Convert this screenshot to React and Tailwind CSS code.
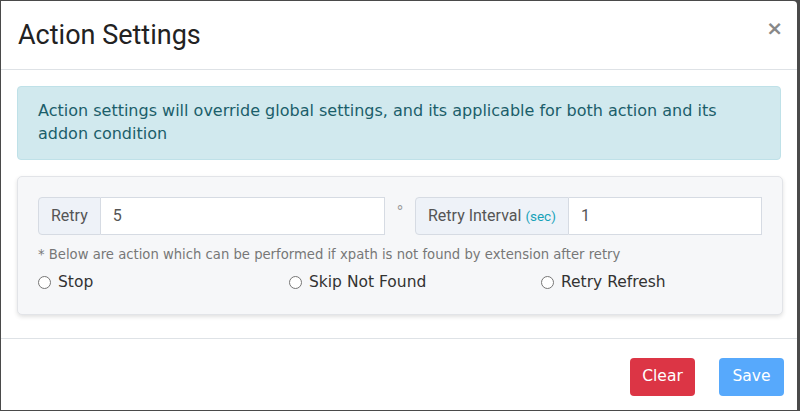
import React from 'react';

const body = { fontFamily: '"DejaVu Sans", "Open Sans", sans-serif' };
const roboto = { fontFamily: 'Roboto, sans-serif' };

function InputGroup({ label, value, sub }) {
  return (
    <div className="flex h-[38px] w-[347px]">
      <div className="flex items-center px-3 bg-[#eef2f8] border border-[#d6dbe3] rounded-l-[4px] text-[16px] text-[#555]" style={roboto}>
        {label}
        {sub && <span className="ml-[4px] text-[13.5px] text-[#17a2b8]">{sub}</span>}
      </div>
      <div className="flex-1 flex items-center pl-[12px] bg-white border border-l-0 border-[#d6dbe3] text-[16px] text-[#555]" style={roboto}>
        {value}
      </div>
    </div>
  );
}

function Radio({ label }) {
  return (
    <label className="flex items-center gap-[7px] text-[15.5px] text-[#333]">
      <span className="w-[13px] h-[13px] rounded-full border border-[#767676] bg-white" />
      {label}
    </label>
  );
}

export default function App() {
  return (
    <div className="w-[800px] h-[411px] bg-[#4a4a4a] pl-[1px] pt-[1px] overflow-hidden" style={body}>
      <div className="w-[796px] h-[409px] bg-white rounded-tr-[4px] flex flex-col">
        <div className="h-[69px] flex items-center justify-between pl-[17px] pr-[14px] border-b border-[#dee2e6]">
          <div className="text-[27px] text-[#222] pt-[1px]" style={roboto}>Action Settings</div>
          <div className="text-[20px] font-bold text-[#888] leading-none -mt-[14px]">×</div>
        </div>
        <div className="px-[16px] pt-[16px]">
          <div className="h-[74px] bg-[#d1e9ee] border border-[#bfe1e8] rounded-[4px] pl-[20px] pr-[20px] pt-[12px] text-[16px] leading-[23px] text-[#1b5e6a]">
            Action settings will override global settings, and its applicable for both action and its addon condition
          </div>
          <div className="mt-[16px] h-[139px] w-[766px] bg-[#f6f7f9] border border-[#e2e4e8] rounded-[5px] shadow-[0_2px_4px_rgba(0,0,0,0.12)] px-[20px] pt-[20px]">
            <div className="flex items-center">
              <InputGroup label="Retry" value="5" />
              <div className="w-[30px] text-center text-[#999] text-[14px] -mt-[10px]">°</div>
              <InputGroup label="Retry Interval" sub="(sec)" value="1" />
            </div>
            <div className="mt-[10px] text-[13.2px] text-[#777]">* Below are action which can be performed if xpath is not found by extension after retry</div>
            <div className="mt-[6px] grid grid-cols-[251px_252px_1fr]">
              <Radio label="Stop" />
              <Radio label="Skip Not Found" />
              <Radio label="Retry Refresh" />
            </div>
          </div>
        </div>
        <div className="mt-auto h-[72px] border-t border-[#dee2e6] flex items-center justify-end gap-[24px] pr-[13px] pt-[4px]">
          <button className="h-[38px] w-[65px] rounded-[4px] bg-[#dc3545] text-white text-[15.5px]">Clear</button>
          <button className="h-[38px] w-[65px] rounded-[4px] bg-[#57a9fc] text-white text-[15.5px]">Save</button>
        </div>
      </div>
    </div>
  );
}
